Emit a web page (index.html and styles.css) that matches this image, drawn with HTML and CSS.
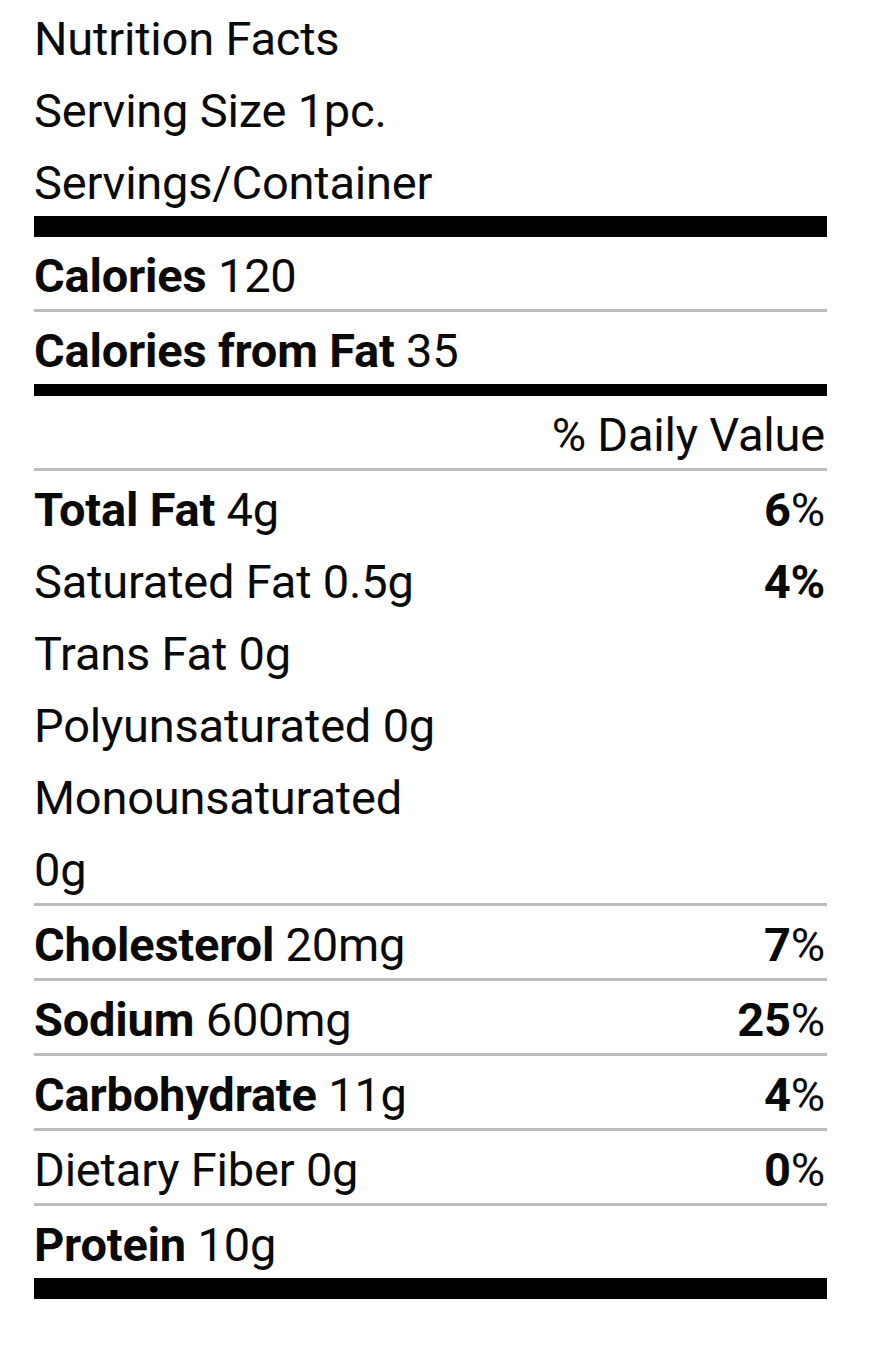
FILE: index.html
```html
<!DOCTYPE html>
<html lang="en">
<head>
<meta charset="utf-8">
<title>Nutrition Facts</title>
<link rel="stylesheet" href="styles.css">
</head>
<body>
<section class="label">
  <div class="line">Nutrition Facts</div>
  <div class="line">Serving Size 1pc.</div>
  <div class="line">Servings/Container</div>
  <div class="bar bar-thick"></div>
  <div class="row"><span><b>Calories</b> 120</span></div>
  <div class="row ruled"><span><b>Calories from Fat</b> 35</span></div>
  <div class="bar bar-mid"></div>
  <div class="row row-right"><span>% Daily Value</span></div>
  <div class="row ruled"><span><b>Total Fat</b> 4g</span><span><b>6</b>%</span></div>
  <div class="row"><span>Saturated Fat 0.5g</span><span><b>4%</b></span></div>
  <div class="row"><span>Trans Fat 0g</span></div>
  <div class="row"><span>Polyunsaturated 0g</span></div>
  <div class="row"><span>Monounsaturated</span></div>
  <div class="row"><span>0g</span></div>
  <div class="row ruled"><span><b>Cholesterol</b> 20mg</span><span><b>7</b>%</span></div>
  <div class="row ruled"><span><b>Sodium</b> 600mg</span><span><b>25</b>%</span></div>
  <div class="row ruled"><span><b>Carbohydrate</b> 11g</span><span><b>4</b>%</span></div>
  <div class="row ruled"><span>Dietary Fiber 0g</span><span><b>0</b>%</span></div>
  <div class="row ruled"><span><b>Protein</b> 10g</span></div>
  <div class="bar bar-thick"></div>
</section>
</body>
</html>
```

FILE: styles.css
```css
html, body {
  margin: 0;
  padding: 0;
  background: #ffffff;
}

body {
  font-family: Roboto, "Liberation Sans", Arial, sans-serif;
  font-size: 47px;
  color: #0a0a0a;
  letter-spacing: -0.2px;
}

.label {
  width: 793px;
  margin-left: 34px;
}

.line,
.row {
  height: 72px;
  line-height: 66px;
  padding-top: 6px;
  box-sizing: border-box;
  white-space: nowrap;
}

.row {
  display: flex;
  justify-content: space-between;
  padding-right: 2px;
}

.row-right {
  justify-content: flex-end;
}

.ruled {
  height: 75px;
  border-top: 3px solid #bdbdbd;
}

b {
  font-weight: 700;
}

.bar {
  background: #000000;
}

.bar-thick {
  height: 21px;
}

.bar-mid {
  height: 12px;
}
```
